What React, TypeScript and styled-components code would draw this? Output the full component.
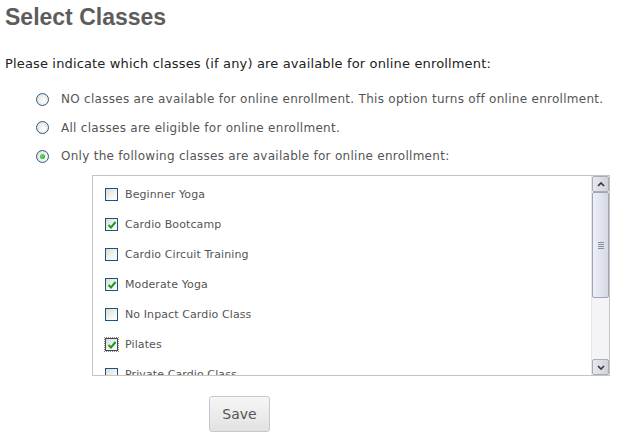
import React from 'react'
import styled, { createGlobalStyle } from 'styled-components'

const GlobalStyle = createGlobalStyle`
  body {
    margin: 0;
    background: #fff;
    font-family: 'DejaVu Sans', Verdana, sans-serif;
  }
`

const Page = styled.div`
  padding: 3px 5px 0 5px;
  width: 623px;
  box-sizing: border-box;
`

const Title = styled.h2`
  margin: 0;
  font-family: 'Liberation Sans', Arial, sans-serif;
  font-weight: bold;
  font-size: 23px;
  line-height: 28px;
  color: #5c5c5c;
`

const Prompt = styled.p`
  margin: 25px 0 0 0;
  font-size: 13px;
  letter-spacing: 0.15px;
  line-height: 16px;
  color: #222;
`

const OptionList = styled.div`
  display: flex;
  flex-direction: column;
  gap: 12.5px;
  margin: 19px 0 0 31px;
`

const OptionRow = styled.label`
  display: flex;
  align-items: center;
  gap: 12px;
  font-size: 12px;
  letter-spacing: 0.28px;
  line-height: 16px;
  color: #555;
`

const Radio = styled.span<{ $checked?: boolean }>`
  width: 11px;
  height: 11px;
  border-radius: 50%;
  border: 1px solid #2a5a8a;
  background: radial-gradient(circle at 60% 60%, #fff 0%, #e8e8e4 60%, #d4d4ce 100%);
  display: flex;
  align-items: center;
  justify-content: center;
  flex: none;
  &::after {
    content: '';
    display: ${p => (p.$checked ? 'block' : 'none')};
    width: 5px;
    height: 5px;
    border-radius: 50%;
    background: radial-gradient(circle at 40% 40%, #6ee06e, #1a9a1a);
  }
`

const ListBox = styled.div`
  display: flex;
  margin: 11px 0 0 87px;
  width: 518px;
  height: 201px;
  border: 1px solid #c4c4c4;
  box-sizing: border-box;
  background: #fff;
`

const ListItems = styled.div`
  flex: 1;
  overflow: hidden;
  padding: 10px 0 0 12px;
  display: flex;
  flex-direction: column;
  gap: 14px;
`

const ItemRow = styled.label`
  display: flex;
  align-items: center;
  gap: 7px;
  height: 16px;
  flex: none;
  font-size: 11px;
  letter-spacing: 0.1px;
  color: #555;
`

const Box = styled.span<{ $focus?: boolean }>`
  width: 11px;
  height: 11px;
  border: 1px solid #1c5180;
  background: linear-gradient(135deg, #dcdcd6 0%, #f4f4f0 60%, #fff 100%);
  flex: none;
  position: relative;
  outline: ${p => (p.$focus ? '1px dotted #c07a30' : 'none')};
  outline-offset: 0;
  svg {
    position: absolute;
    left: 1px;
    top: 1px;
  }
`

const ScrollBar = styled.div`
  width: 17px;
  display: flex;
  flex-direction: column;
  background: #f4f4f6;
  border-left: 1px solid #e6e6ea;
`

const ArrowButton = styled.div`
  height: 16px;
  box-sizing: border-box;
  border: 1px solid #a8acb8;
  border-radius: 2px;
  background: linear-gradient(90deg, #e8e9ef, #d0d2dc);
  display: flex;
  align-items: center;
  justify-content: center;
`

const Thumb = styled.div`
  height: 106px;
  box-sizing: border-box;
  border: 1px solid #a0a4b4;
  border-radius: 2px;
  background: linear-gradient(90deg, #eef0f6, #d6d8e4);
  display: flex;
  align-items: center;
  justify-content: center;
`

const Track = styled.div`
  flex: 1;
`

const Grip = styled.div`
  width: 6px;
  height: 7px;
  background: repeating-linear-gradient(180deg, #8a8e9c 0 1px, transparent 1px 2px);
`

const SaveRow = styled.div`
  margin: 20px 0 0 204px;
`

const SaveButton = styled.button`
  width: 61px;
  height: 36px;
  border: 1px solid #c8c8c8;
  border-radius: 3px;
  background: linear-gradient(180deg, #f6f6f6, #e2e2e2);
  font-family: 'DejaVu Sans', Verdana, sans-serif;
  font-size: 14px;
  color: #555;
  padding: 0;
`

const Check = () => (
  <svg width="10" height="10" viewBox="0 0 10 10">
    <path d="M1.5 5 L4 7.5 L8.5 2" fill="none" stroke="#1f9a1f" strokeWidth="2" />
  </svg>
)

const classes = [
  { name: 'Beginner Yoga', checked: false },
  { name: 'Cardio Bootcamp', checked: true },
  { name: 'Cardio Circuit Training', checked: false },
  { name: 'Moderate Yoga', checked: true },
  { name: 'No Inpact Cardio Class', checked: false },
  { name: 'Pilates', checked: true, focus: true },
  { name: 'Private Cardio Class', checked: false },
  { name: 'Restorative Yoga', checked: false },
]

const options = [
  { text: 'NO classes are available for online enrollment. This option turns off online enrollment.', checked: false },
  { text: 'All classes are eligible for online enrollment.', checked: false },
  { text: 'Only the following classes are available for online enrollment:', checked: true },
]

export default function App() {
  return (
    <Page>
      <GlobalStyle />
      <Title>Select Classes</Title>
      <Prompt>Please indicate which classes (if any) are available for online enrollment:</Prompt>
      <OptionList>
        {options.map(o => (
          <OptionRow key={o.text}>
            <Radio $checked={o.checked} />
            {o.text}
          </OptionRow>
        ))}
      </OptionList>
      <ListBox>
        <ListItems>
          {classes.map(c => (
            <ItemRow key={c.name}>
              <Box $focus={c.focus}>{c.checked && <Check />}</Box>
              {c.name}
            </ItemRow>
          ))}
        </ListItems>
        <ScrollBar>
          <ArrowButton>
            <svg width="8" height="5" viewBox="0 0 8 5">
              <path d="M1 4 L4 1 L7 4" fill="none" stroke="#333" strokeWidth="1.6" />
            </svg>
          </ArrowButton>
          <Thumb>
            <Grip />
          </Thumb>
          <Track />
          <ArrowButton>
            <svg width="8" height="5" viewBox="0 0 8 5">
              <path d="M1 1 L4 4 L7 1" fill="none" stroke="#333" strokeWidth="1.6" />
            </svg>
          </ArrowButton>
        </ScrollBar>
      </ListBox>
      <SaveRow>
        <SaveButton>Save</SaveButton>
      </SaveRow>
    </Page>
  )
}
